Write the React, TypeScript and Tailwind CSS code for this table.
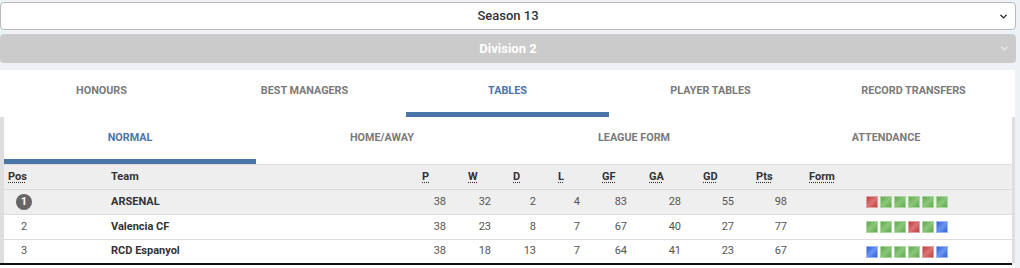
import { ChevronDown } from 'lucide-react';

const tabs = ['HONOURS', 'BEST MANAGERS', 'TABLES', 'PLAYER TABLES', 'RECORD TRANSFERS'];
const subTabs = ['NORMAL', 'HOME/AWAY', 'LEAGUE FORM', 'ATTENDANCE'];

type Row = { pos: number; team: string; stats: number[]; form: string[] };

const rows: Row[] = [
  { pos: 1, team: 'ARSENAL', stats: [38, 32, 2, 4, 83, 28, 55, 98], form: ['L', 'W', 'W', 'W', 'W', 'W'] },
  { pos: 2, team: 'Valencia CF', stats: [38, 23, 8, 7, 67, 40, 27, 77], form: ['W', 'W', 'W', 'L', 'W', 'D'] },
  { pos: 3, team: 'RCD Espanyol', stats: [38, 18, 13, 7, 64, 41, 23, 67], form: ['D', 'W', 'W', 'W', 'L', 'D'] },
];

const statHeads = ['P', 'W', 'D', 'L', 'GF', 'GA', 'GD', 'Pts'];

const formStyle: Record<string, string> = {
  W: 'bg-gradient-to-br from-[#5fa84d] via-[#8cc67a] to-[#5fa84d] border-[#a9d69c]',
  L: 'bg-gradient-to-br from-[#c03c3c] via-[#d97474] to-[#c03c3c] border-[#e0a0a0]',
  D: 'bg-gradient-to-br from-[#2f62dc] via-[#6b94ee] to-[#2f62dc] border-[#9db6f0]',
};

const gridCols = 'grid grid-cols-[103px_311px_46px_45px_45px_44px_47px_54px_53px_53px_57px_1fr]';

export default function App() {
  return (
    <div className="w-[1020px] h-[268px] overflow-hidden bg-[#eef1f5] font-['Roboto',sans-serif]">
      {/* Selects */}
      <div className="w-[1016px] pt-[2px]">
        <div className="relative h-[28px] bg-white border border-[#b9b9b9] rounded-[4px] flex items-center justify-center">
          <span className="text-[13px] font-medium text-[#333]">Season 13</span>
          <ChevronDown className="absolute right-[6px] top-[8px] w-[11px] h-[11px] text-[#222]" strokeWidth={3} />
        </div>
        <div className="relative mt-[4px] h-[29px] bg-[#cbcbcb] rounded-[4px] flex items-center justify-center">
          <span className="text-[13px] font-bold text-white">Division 2</span>
          <ChevronDown className="absolute right-[6px] top-[9px] w-[11px] h-[11px] text-[#e8e8e8]" strokeWidth={3} />
        </div>
      </div>

      {/* Main tabs */}
      <div className="mt-[7px] w-[1015px] bg-white grid grid-cols-5">
        {tabs.map((t) => (
          <div key={t} className="flex flex-col">
            <div
              className={`h-[42px] flex items-center justify-center text-[10.8px] font-bold ${
                t === 'TABLES' ? 'text-[#4a75a8]' : 'text-[#7a7a7a]'
              }`}
            >
              {t}
            </div>
            <div className={`h-[5px] ${t === 'TABLES' ? 'bg-[#4a75a8]' : ''}`} />
          </div>
        ))}
      </div>

      {/* Sub panel */}
      <div className="w-[1015px] bg-[#dedede] pl-[4px] pr-[3px]">
        <div className="bg-white">
          <div className="grid grid-cols-4">
            {subTabs.map((t) => (
              <div key={t} className="flex flex-col">
                <div
                  className={`h-[42px] flex items-center justify-center text-[10.8px] font-bold ${
                    t === 'NORMAL' ? 'text-[#4a75a8]' : 'text-[#7a7a7a]'
                  }`}
                >
                  {t}
                </div>
                <div className={`h-[5px] ${t === 'NORMAL' ? 'bg-[#4a75a8]' : ''}`} />
              </div>
            ))}
          </div>

          {/* Table */}
          <div className="text-[11px]">
            <div className={`${gridCols} h-[25px] items-center bg-[#eeeeee] border-t border-[#dddddd] font-bold text-[#333]`}>
              <div className="pl-[4px]"><span className="underline decoration-dotted underline-offset-2">Pos</span></div>
              <div className="pl-[4px]">Team</div>
              {statHeads.map((h) => (
                <div key={h} className="pl-[4px]">
                  <span className="underline decoration-dotted underline-offset-2">{h}</span>
                </div>
              ))}
              <div className="pl-[4px]"><span className="underline decoration-dotted underline-offset-2">Form</span></div>
              <div />
            </div>

            {rows.map((r, i) => (
              <div
                key={r.pos}
                className={`${gridCols} ${i === 2 ? 'h-[24px]' : 'h-[25px]'} items-center border-t border-[#dcdcdc] ${
                  i === 0 ? 'bg-[#efefef]' : 'bg-white'
                }`}
              >
                <div className="pl-[12px]">
                  {r.pos === 1 ? (
                    <span className="w-[16px] h-[16px] rounded-full bg-[#666] text-white font-bold flex items-center justify-center">
                      1
                    </span>
                  ) : (
                    <span className="pl-[5px] text-[#555]">{r.pos}</span>
                  )}
                </div>
                <div className="pl-[4px] font-bold text-[#333]">{r.team}</div>
                {r.stats.map((s, j) => (
                  <div key={j} className="text-right pr-[18px] text-[#555]">
                    {s}
                  </div>
                ))}
                <div />
                <div className="pl-[4px] flex gap-[2px]">
                  {r.form.map((f, k) => (
                    <span key={k} className={`w-[12px] h-[12px] border ${formStyle[f]}`} />
                  ))}
                </div>
              </div>
            ))}
          </div>
        </div>
      </div>
      <div className="w-[1012px] h-[2px] bg-[#111]" />
      <div className="w-[1015px] h-[10px] bg-white" />
    </div>
  );
}
